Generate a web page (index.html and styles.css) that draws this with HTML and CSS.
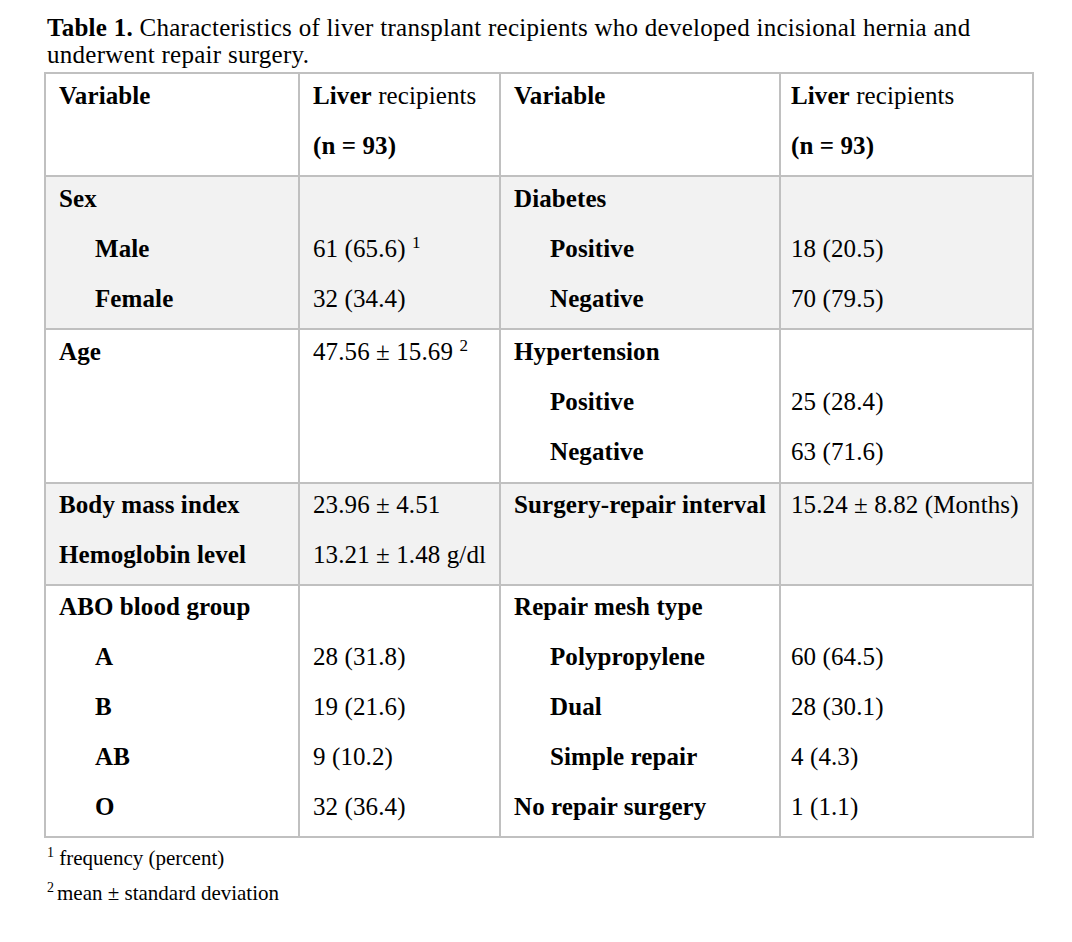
FILE: index.html
```html
<!DOCTYPE html>
<html>
<head>
<meta charset="utf-8">
<link rel="stylesheet" href="styles.css">
</head>
<body>
<div class="page">
  <p class="title"><b>Table 1.</b> Characteristics of liver transplant recipients who developed incisional hernia and underwent repair surgery.</p>
  <table class="tbl">
    <colgroup>
      <col class="c1"><col class="c2"><col class="c3"><col class="c4">
    </colgroup>
    <tr class="r1">
      <td><div class="ln b">Variable</div></td>
      <td><div class="ln"><b>Liver</b> recipients</div><div class="ln b">(n = 93)</div></td>
      <td><div class="ln b">Variable</div></td>
      <td class="last"><div class="ln"><b>Liver</b> recipients</div><div class="ln b">(n = 93)</div></td>
    </tr>
    <tr class="gray r2">
      <td><div class="ln b">Sex</div><div class="ln b ind">Male</div><div class="ln b ind">Female</div></td>
      <td><div class="ln"></div><div class="ln">61 (65.6) <sup>1</sup></div><div class="ln">32 (34.4)</div></td>
      <td><div class="ln b">Diabetes</div><div class="ln b ind">Positive</div><div class="ln b ind">Negative</div></td>
      <td class="last"><div class="ln"></div><div class="ln">18 (20.5)</div><div class="ln">70 (79.5)</div></td>
    </tr>
    <tr class="r3">
      <td><div class="ln b">Age</div></td>
      <td><div class="ln">47.56 ± 15.69 <sup>2</sup></div></td>
      <td><div class="ln b">Hypertension</div><div class="ln b ind">Positive</div><div class="ln b ind">Negative</div></td>
      <td class="last"><div class="ln"></div><div class="ln">25 (28.4)</div><div class="ln">63 (71.6)</div></td>
    </tr>
    <tr class="gray">
      <td><div class="ln b">Body mass index</div><div class="ln b">Hemoglobin level</div></td>
      <td><div class="ln">23.96 ± 4.51</div><div class="ln">13.21 ± 1.48 g/dl</div></td>
      <td><div class="ln b">Surgery-repair interval</div></td>
      <td class="last"><div class="ln">15.24 ± 8.82 (Months)</div></td>
    </tr>
    <tr>
      <td><div class="ln b">ABO blood group</div><div class="ln b ind">A</div><div class="ln b ind">B</div><div class="ln b ind">AB</div><div class="ln b ind">O</div></td>
      <td><div class="ln"></div><div class="ln">28 (31.8)</div><div class="ln">19 (21.6)</div><div class="ln">9 (10.2)</div><div class="ln">32 (36.4)</div></td>
      <td><div class="ln b">Repair mesh type</div><div class="ln b ind">Polypropylene</div><div class="ln b ind">Dual</div><div class="ln b ind">Simple repair</div><div class="ln b">No repair surgery</div></td>
      <td class="last"><div class="ln"></div><div class="ln">60 (64.5)</div><div class="ln">28 (30.1)</div><div class="ln">4 (4.3)</div><div class="ln">1 (1.1)</div></td>
    </tr>
  </table>
  <div class="notes">
    <p class="note"><sup>1</sup> frequency (percent)</p>
    <p class="note"><sup class="tight">2</sup>mean ± standard deviation</p>
  </div>
</div>
</body>
</html>
```
FILE: styles.css
```css
html, body {
  margin: 0;
  padding: 0;
  background: #ffffff;
}
body {
  font-family: "Liberation Serif", "Times New Roman", serif;
  color: #000000;
}
.page {
  width: 990px;
  padding: 14px 0 0 44px;
}
.title {
  margin: 0 0 4px 3px;
  font-size: 25px;
  line-height: 27px;
  letter-spacing: 0.27px;
}
.tbl {
  border-collapse: collapse;
  table-layout: fixed;
  width: 990px;
  font-size: 25px;
}
.c1 { width: 254px; }
.c2 { width: 201px; }
.c3 { width: 280px; }
.c4 { width: 253px; }
.tbl td {
  border: 2px solid #c0c0c0;
  vertical-align: top;
  padding: 0 0 0 13px;
}
.tbl td.last {
  padding-left: 10px;
}
.r1 td, .r2 td {
  padding-top: 1px;
}
.r3 td {
  padding-top: 1px;
  padding-bottom: 1px;
}
.gray td {
  background: #f2f2f2;
}
.ln {
  height: 50px;
  line-height: 41px;
  white-space: nowrap;
  letter-spacing: 0.1px;
}
.b {
  font-weight: bold;
}
.ind {
  padding-left: 36px;
}
.ln sup {
  font-size: 17px;
  vertical-align: 9px;
  line-height: 0;
}
.notes {
  margin-top: 3px;
  padding-left: 3px;
}
.note {
  margin: 0;
  font-size: 21px;
  line-height: 35px;
}
.note sup {
  font-size: 14px;
  vertical-align: 8px;
  line-height: 0;
}
.note sup.tight {
  margin-right: 3px;
}
```
